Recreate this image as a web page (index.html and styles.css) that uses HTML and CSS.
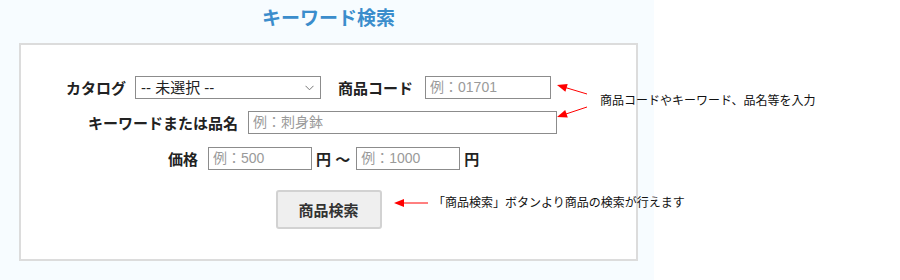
FILE: index.html
```html
<!DOCTYPE html>
<html lang="ja">
<head>
    <meta charset="UTF-8">
    <meta name="viewport" content="width=device-width, initial-scale=1.0">
    <title>キーワード検索</title>
    <link rel="stylesheet" href="styles.css">
</head>
<body>
    <div class="panel">
        <h1 class="title">キーワード検索</h1>
        <div class="search-box">
            <div class="row row-catalog">
                <label for="catalog">カタログ</label>
                <div class="select-wrap">
                    <select id="catalog" class="catalog-select">
                        <option>-- 未選択 --</option>
                    </select>
                    <svg class="chevron" width="9" height="6" viewBox="0 0 9 6">
                        <path d="M0.5 0.8 L4.5 4.8 L8.5 0.8" fill="none" stroke="#777" stroke-width="1"/>
                    </svg>
                </div>
                <label for="code" class="code-label">商品コード</label>
                <input type="text" id="code" class="code-input" placeholder="例：01701">
            </div>
            <div class="row row-keyword">
                <label for="keyword">キーワードまたは品名</label>
                <input type="text" id="keyword" class="keyword-input" placeholder="例：刺身鉢">
            </div>
            <div class="row row-price">
                <label for="priceMin">価格</label>
                <input type="text" id="priceMin" class="price-input" placeholder="例：500">
                <span class="unit">円 〜</span>
                <input type="text" id="priceMax" class="price-input" placeholder="例：1000">
                <span class="unit">円</span>
            </div>
            <div class="button-row">
                <button class="search-button">商品検索</button>
            </div>
        </div>
    </div>

    <!-- annotation arrows -->
    <svg class="arrows" width="900" height="280" viewBox="0 0 900 280">
        <line x1="587" y1="94" x2="562" y2="86.5" stroke="#f00" stroke-width="1"/>
        <path d="M557 85 L567.7 84 L565.4 91.7 Z" fill="#f00"/>
        <line x1="587" y1="107" x2="562" y2="115.3" stroke="#f00" stroke-width="1"/>
        <path d="M557 117 L567.8 117.6 L565.2 110 Z" fill="#f00"/>
        <line x1="428" y1="203" x2="400" y2="203" stroke="#f00" stroke-width="1"/>
        <path d="M394 203 L404 199 L404 207 Z" fill="#f00"/>
    </svg>
    <div class="note note-input">商品コードやキーワード、品名等を入力</div>
    <div class="note note-button">「商品検索」ボタンより商品の検索が行えます</div>
</body>
</html>
```

FILE: styles.css
```css
body {
    margin: 0;
    background: #ffffff;
    color: #333;
    font-family: "Liberation Sans", "Noto Sans CJK JP", sans-serif;
    width: 900px;
    height: 280px;
    overflow: hidden;
}
.panel {
    width: 654px;
    height: 280px;
    background: #f7fcff;
    overflow: hidden;
}
.title {
    margin: 0 16px 0 19px;
    height: 43px;
    line-height: 38px;
    text-align: center;
    font-size: 19px;
    font-weight: bold;
    color: #3b8dcc;
}
.search-box {
    margin-left: 19px;
    width: 615px;
    border: 2px solid #dcdcdc;
    background: #fff;
    padding: 30px 0;
}
.row {
    display: flex;
    align-items: center;
    height: 24px;
}
.row label, .unit {
    font-size: 15px;
    font-weight: bold;
    color: #222;
    white-space: nowrap;
}
.row-catalog {
    padding-left: 45px;
}
.row-keyword {
    margin-top: 11px;
    padding-left: 67px;
}
.row-price {
    margin-top: 12px;
    padding-left: 147px;
}
input, select {
    box-sizing: border-box;
    height: 23px;
    border: 1px solid #8c8c8c;
    background: #fff;
    font-family: inherit;
    padding: 0 4px;
    margin: 0;
    color: #222;
}
input {
    font-size: 14px;
}
input::placeholder {
    color: #9a9a9a;
}
.select-wrap {
    position: relative;
    margin-left: 9px;
    height: 23px;
}
.catalog-select {
    width: 186px;
    font-size: 15px;
    padding: 0 5px;
    -webkit-appearance: none;
    appearance: none;
    border-radius: 0;
}
.chevron {
    position: absolute;
    right: 7px;
    top: 9px;
    pointer-events: none;
}
.code-label {
    margin-left: 17px;
}
.code-input {
    width: 126px;
    margin-left: 12px;
}
.keyword-input {
    width: 309px;
    margin-left: 10px;
}
.price-input {
    width: 104px;
    margin-left: 10px;
}
.unit {
    margin-left: 4px;
}
.unit + .price-input {
    margin-left: 6px;
}
.button-row {
    display: flex;
    justify-content: center;
    margin-top: 20px;
}
.search-button {
    width: 106px;
    height: 39px;
    background: #efefef;
    border: 2px solid #d2d2d2;
    border-radius: 3px;
    font-family: inherit;
    font-size: 15px;
    font-weight: bold;
    color: #333;
}
.arrows {
    position: absolute;
    top: 0;
    left: 0;
    pointer-events: none;
}
.note {
    position: absolute;
    font-size: 12px;
    color: #111;
    line-height: 16px;
    white-space: nowrap;
}
.note-input {
    left: 600px;
    top: 93px;
}
.note-button {
    left: 433px;
    top: 195px;
}
```
